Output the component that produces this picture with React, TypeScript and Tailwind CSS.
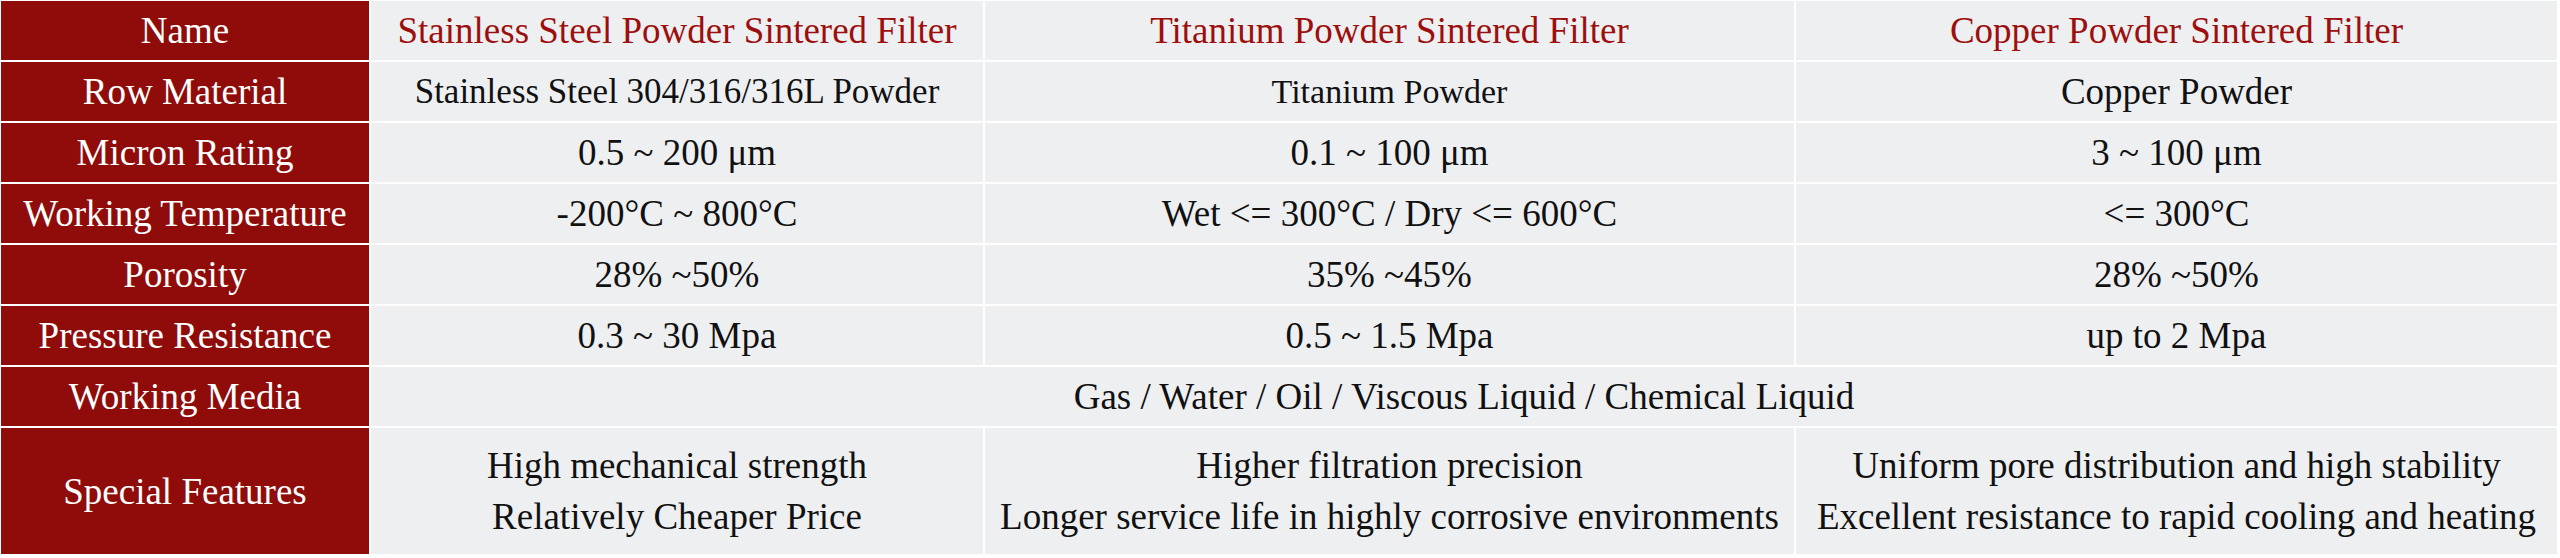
import React from 'react';

type Row = {
  label: string;
  cells: string[];
  sizes?: string[];
};

const ROWS: Row[] = [
  {
    label: 'Row Material',
    cells: ['Stainless Steel 304/316/316L Powder', 'Titanium Powder', 'Copper Powder'],
    sizes: ['text-[35px]', 'text-[34px]', 'text-[37px]'],
  },
  { label: 'Micron Rating', cells: ['0.5 ~ 200 μm', '0.1 ~ 100 μm', '3 ~ 100 μm'] },
  {
    label: 'Working Temperature',
    cells: ['-200°C ~ 800°C', 'Wet <= 300°C / Dry <= 600°C', '<= 300°C'],
  },
  { label: 'Porosity', cells: ['28% ~50%', '35% ~45%', '28% ~50%'] },
  { label: 'Pressure Resistance', cells: ['0.3 ~ 30 Mpa', '0.5 ~ 1.5 Mpa', 'up to 2 Mpa'] },
];

const HEADERS = [
  'Stainless Steel Powder Sintered Filter',
  'Titanium Powder Sintered Filter',
  'Copper Powder Sintered Filter',
];

const FEATURES = [
  ['High mechanical strength', 'Relatively Cheaper Price'],
  ['Higher filtration precision', 'Longer service life in highly corrosive environments'],
  ['Uniform pore distribution and high stability', 'Excellent resistance to rapid cooling and heating'],
];

function LabelCell({ children, tall }: { children: React.ReactNode; tall?: boolean }) {
  return (
    <div
      className={
        'flex items-center justify-center bg-[#8f0c0a] text-[37px] text-white ' +
        (tall ? 'h-[126px]' : 'h-[59px]')
      }
    >
      {children}
    </div>
  );
}

function Cell({ children, className }: { children: React.ReactNode; className?: string }) {
  return (
    <div
      className={
        'flex items-center justify-center whitespace-nowrap bg-[#eeeff1] text-[#111111] ' +
        (className ?? '')
      }
    >
      {children}
    </div>
  );
}

export default function App() {
  return (
    <div
      className="min-h-[558px] w-[2560px] bg-white pt-[1px] pl-[1px]"
      style={{ fontFamily: '"Liberation Serif", "Times New Roman", serif' }}
    >
      <div className="grid grid-cols-[368px_612px_809px_761px] gap-[2px] leading-none">
        {/* Header */}
        <LabelCell>Name</LabelCell>
        {HEADERS.map((h) => (
          <Cell key={h} className="text-[37px]">
            <span className="text-[#9d0f0e]">{h}</span>
          </Cell>
        ))}

        {/* Spec rows */}
        {ROWS.map((row) => (
          <React.Fragment key={row.label}>
            <LabelCell>{row.label}</LabelCell>
            {row.cells.map((c, i) => (
              <Cell key={i} className={row.sizes?.[i] ?? 'text-[37px]'}>
                {c}
              </Cell>
            ))}
          </React.Fragment>
        ))}

        {/* Working media spans all product columns */}
        <LabelCell>Working Media</LabelCell>
        <Cell className="col-span-3 text-[37px]">
          Gas / Water / Oil / Viscous Liquid / Chemical Liquid
        </Cell>

        {/* Special features */}
        <LabelCell tall>Special Features</LabelCell>
        {FEATURES.map((lines, i) => (
          <Cell key={i} className="flex-col text-[37px] leading-[51px]">
            {lines.map((l) => (
              <span key={l}>{l}</span>
            ))}
          </Cell>
        ))}
      </div>
    </div>
  );
}
